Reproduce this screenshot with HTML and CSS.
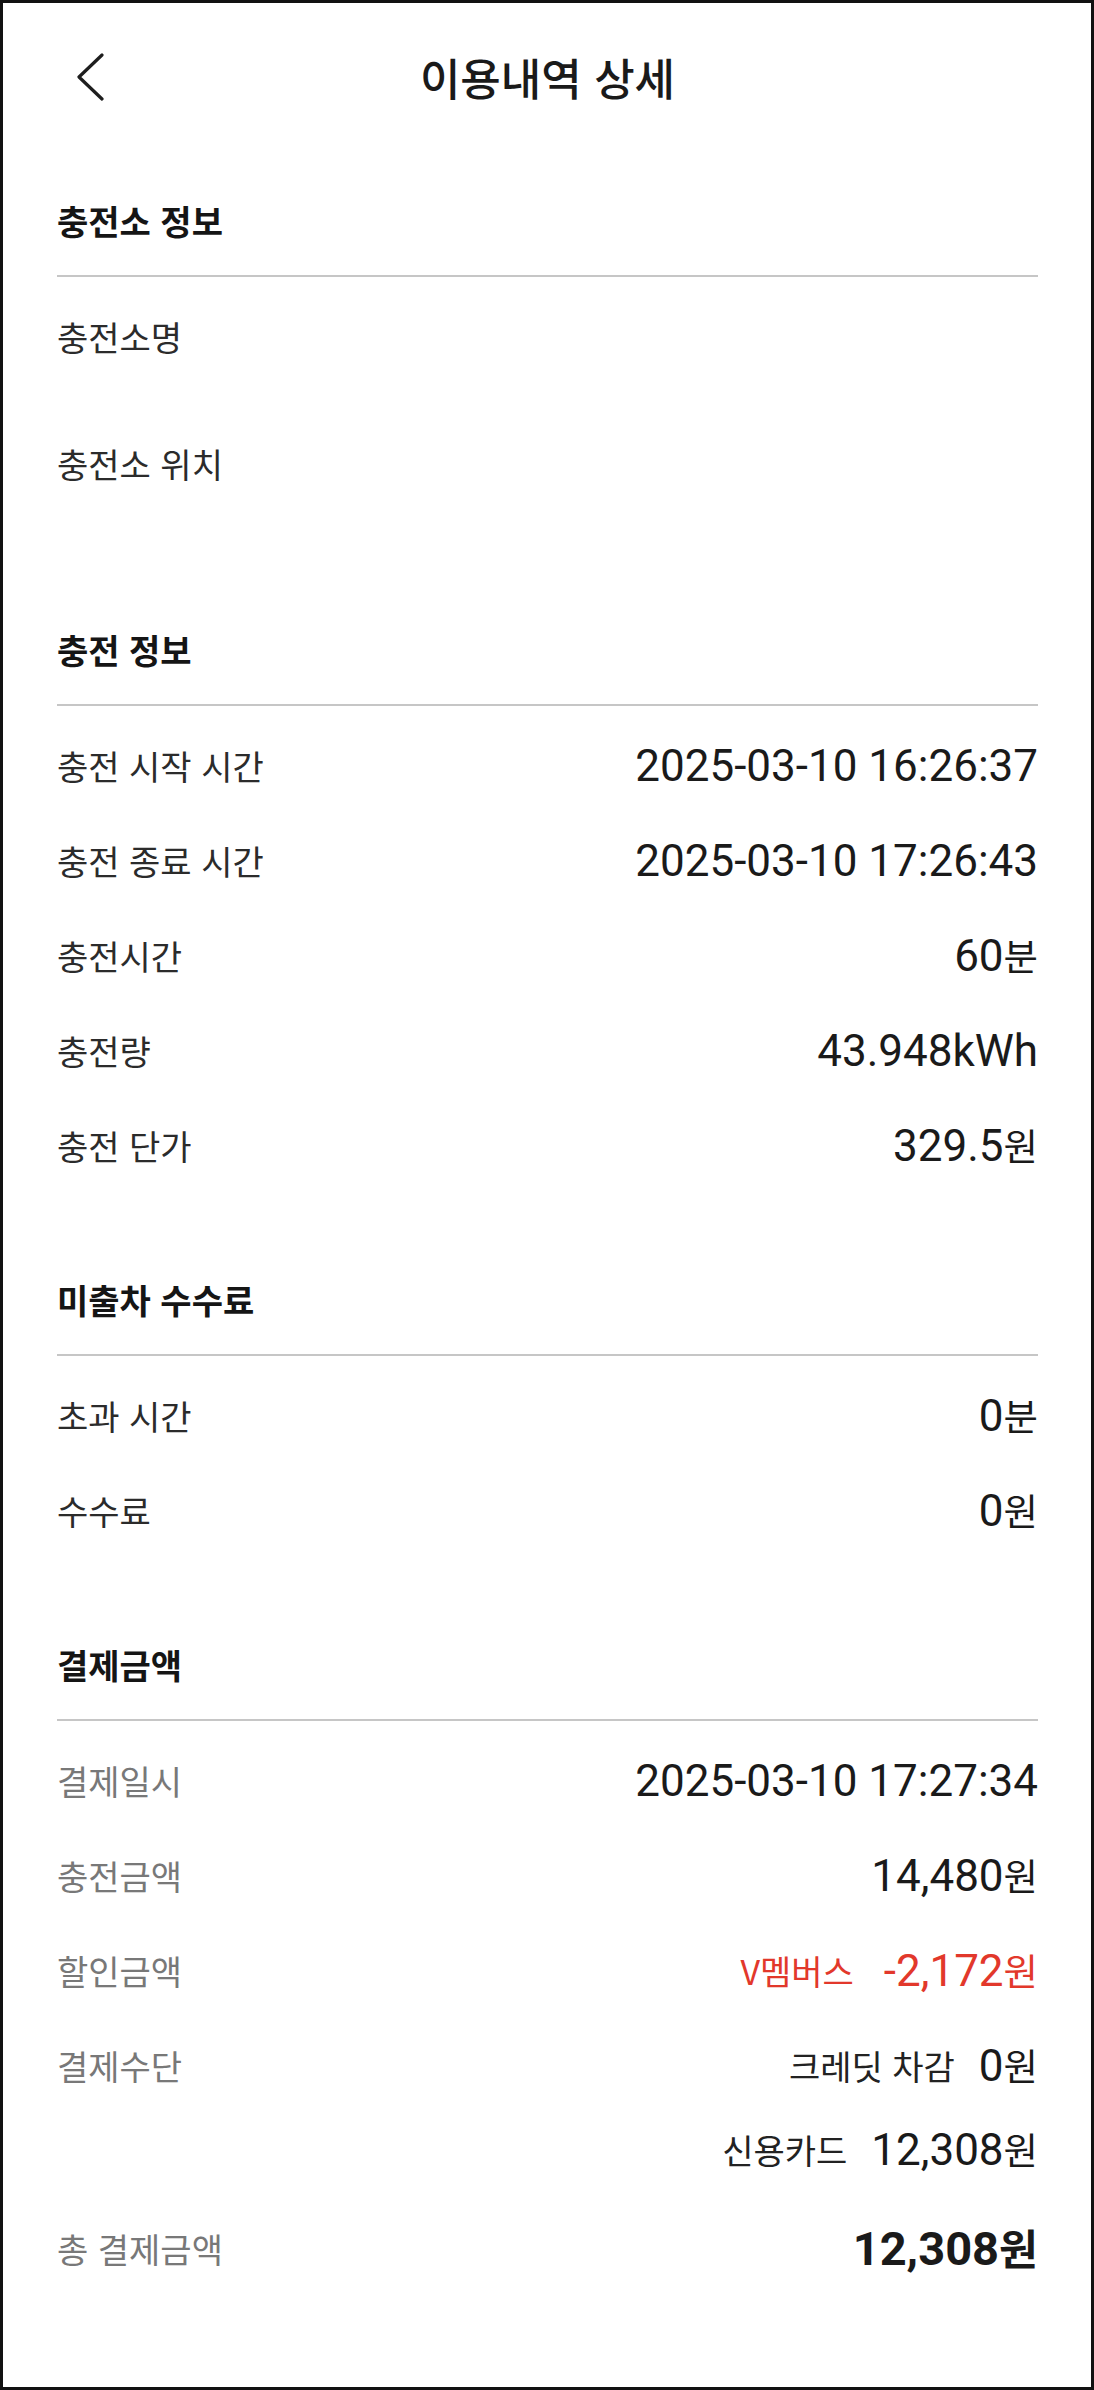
FILE: index.html
```html
<!DOCTYPE html>
<html lang="ko">
<head>
    <meta charset="UTF-8">
    <meta name="viewport" content="width=device-width, initial-scale=1.0">
    <title>이용내역 상세</title>
    <link rel="stylesheet" href="styles.css">
</head>
<body>
<div class="screen">
    <header class="topbar">
        <button class="back" aria-label="뒤로">
            <svg width="30" height="48" viewBox="0 0 30 48">
                <path d="M26 2 L3 24 L26 46" fill="none" stroke="#1e1e1e" stroke-width="3.2" stroke-linecap="round" stroke-linejoin="round"/>
            </svg>
        </button>
        <h1 class="title">이용내역 상세</h1>
        <span></span>
    </header>

    <section class="section first">
        <h2 class="section-title">충전소 정보</h2>
        <div class="rows">
            <div class="row station"><span class="label">충전소명</span><span class="value"></span></div>
            <div class="row station"><span class="label">충전소 위치</span><span class="value"></span></div>
        </div>
    </section>

    <section class="section">
        <h2 class="section-title">충전 정보</h2>
        <div class="rows">
            <div class="row"><span class="label">충전 시작 시간</span><span class="value">2025-03-10 16:26:37</span></div>
            <div class="row"><span class="label">충전 종료 시간</span><span class="value">2025-03-10 17:26:43</span></div>
            <div class="row"><span class="label">충전시간</span><span class="value">60<span class="unit">분</span></span></div>
            <div class="row"><span class="label">충전량</span><span class="value">43.948kWh</span></div>
            <div class="row"><span class="label">충전 단가</span><span class="value">329.5<span class="unit">원</span></span></div>
        </div>
    </section>

    <section class="section">
        <h2 class="section-title">미출차 수수료</h2>
        <div class="rows">
            <div class="row"><span class="label">초과 시간</span><span class="value">0<span class="unit">분</span></span></div>
            <div class="row"><span class="label">수수료</span><span class="value">0<span class="unit">원</span></span></div>
        </div>
    </section>

    <section class="section pay">
        <h2 class="section-title">결제금액</h2>
        <div class="rows">
            <div class="row"><span class="label">결제일시</span><span class="value">2025-03-10 17:27:34</span></div>
            <div class="row"><span class="label">충전금액</span><span class="value">14,480<span class="unit">원</span></span></div>
            <div class="row"><span class="label">할인금액</span>
                <div class="line discount"><span class="sub">V멤버스</span><span class="value">-2,172<span class="unit">원</span></span></div>
            </div>
            <div class="row method"><span class="label">결제수단</span>
                <div class="stack">
                    <div class="line"><span class="sub">크레딧 차감</span><span class="value">0<span class="unit">원</span></span></div>
                    <div class="line second"><span class="sub">신용카드</span><span class="value">12,308<span class="unit">원</span></span></div>
                </div>
            </div>
            <div class="row total"><span class="label">총 결제금액</span><span class="value strong">12,308<span class="unit">원</span></span></div>
        </div>
    </section>
</div>
</body>
</html>
```

FILE: styles.css
```css
html, body
{
    margin: 0;
    padding: 0;
}
body
{
    background: #fff;
    font-family: "Noto Sans CJK KR", sans-serif;
    color: #222;
}
.screen
{
    box-sizing: border-box;
    width: 1094px;
    height: 2390px;
    border: 3px solid #111;
    padding: 0 53px 0 54px;
}

/* top bar */
.topbar
{
    display: grid;
    grid-template-columns: 1fr auto 1fr;
    align-items: center;
    height: 148px;
}
.back
{
    justify-self: start;
    margin-left: 19px;
    width: 30px;
    height: 48px;
    padding: 0;
    border: 0;
    background: none;
}
.back svg
{
    display: block;
}
.title
{
    margin: 0;
    font-size: 44px;
    font-weight: 500;
    line-height: 1;
    color: #1a1a1a;
}

/* sections */
.section
{
    margin-top: 77px;
}
.section.first
{
    margin-top: 40px;
}
.section-title
{
    margin: 0;
    height: 60px;
    line-height: 60px;
    padding-bottom: 24px;
    border-bottom: 2px solid #c6c6c6;
    font-size: 34px;
    font-weight: 700;
    color: #151515;
}
.rows
{
    display: flex;
    flex-direction: column;
    padding-top: 12px;
}
.row
{
    display: flex;
    justify-content: space-between;
    align-items: center;
    height: 95px;
}
.row.station
{
    margin-bottom: 32px;
}
.label
{
    font-size: 34px;
    line-height: 1;
    color: #2b2b2b;
}
.pay .label
{
    color: #787878;
}
.value
{
    font-family: Roboto, "Noto Sans CJK KR", sans-serif;
    font-size: 44px;
    line-height: 1;
    color: #1a1a1a;
}
.unit
{
    font-family: "Noto Sans CJK KR", sans-serif;
    font-size: 0.85em;
}

/* sub lines in the payment block */
.line
{
    display: flex;
    justify-content: flex-end;
    align-items: center;
    gap: 24px;
    height: 95px;
}
.sub
{
    font-size: 34px;
    line-height: 1;
    color: #222;
}
.discount
{
    gap: 30px;
}
.discount .sub,
.discount .value
{
    color: #e2382b;
}
.row.method
{
    height: auto;
    align-items: flex-start;
}
.row.method > .label
{
    display: flex;
    align-items: center;
    height: 95px;
}
.line.second
{
    height: 73px;
}
.row.total
{
    margin-top: 15px;
}
.value.strong
{
    font-size: 47px;
    font-weight: 700;
}
.value.strong .unit
{
    font-size: 0.9em;
}
```
